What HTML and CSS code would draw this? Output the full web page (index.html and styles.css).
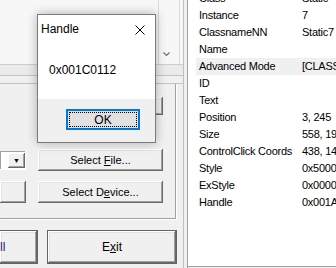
FILE: index.html
```html
<!DOCTYPE html>
<html lang="en">
<head>
  <meta charset="UTF-8" />
  <title>Window Info - Handle</title>
  <link rel="stylesheet" href="styles.css">
</head>
<body>
  <div class="screen">
    <div class="left-pane">
      <div class="top-panel">
        <div class="top-fill"></div>
        <div class="collapser">
          <svg class="chevron" width="7" height="5" viewBox="0 0 7 5">
            <path d="M0.5 0.5 L3.5 3.5 L6.5 0.5" stroke="#707070" stroke-width="1.2" fill="none"/>
          </svg>
        </div>
      </div>
      <div class="band band-a"></div>
      <div class="band band-b"></div>

      <div class="group">
        <div class="btn btn-hidden"></div>
        <div class="group-row">
          <div class="combo">
            <div class="combo-field"></div>
            <div class="combo-btn">&#9660;</div>
          </div>
          <div class="btn btn-wide"><span>Select <u>F</u>ile...</span></div>
        </div>
        <div class="group-row">
          <div class="btn btn-small"></div>
          <div class="btn btn-wide"><span>Select D<u>e</u>vice...</span></div>
        </div>
      </div>

      <div class="bottom-row">
        <div class="btn-frame frame-cut"><div class="btn btn-cut">ll</div></div>
        <div class="btn-frame frame-exit"><div class="btn"><span>E<u>x</u>it</span></div></div>
      </div>
    </div>

    <div class="splitter"></div>

    <div class="list">
      <div class="list-rows">
        <div class="list-row"><span class="col-key">Class</span><span class="col-val">Static</span></div>
        <div class="list-row"><span class="col-key">Instance</span><span class="col-val">7</span></div>
        <div class="list-row"><span class="col-key">ClassnameNN</span><span class="col-val">Static7</span></div>
        <div class="list-row"><span class="col-key">Name</span><span class="col-val"></span></div>
        <div class="list-row selected"><span class="col-key">Advanced Mode</span><span class="col-val">[CLASS:Static; INSTANCE:7]</span></div>
        <div class="list-row"><span class="col-key">ID</span><span class="col-val"></span></div>
        <div class="list-row"><span class="col-key">Text</span><span class="col-val"></span></div>
        <div class="list-row"><span class="col-key">Position</span><span class="col-val">3, 245</span></div>
        <div class="list-row"><span class="col-key">Size</span><span class="col-val">558, 19</span></div>
        <div class="list-row"><span class="col-key">ControlClick Coords</span><span class="col-val">438, 14</span></div>
        <div class="list-row"><span class="col-key">Style</span><span class="col-val">0x50000000</span></div>
        <div class="list-row"><span class="col-key">ExStyle</span><span class="col-val">0x00000000</span></div>
        <div class="list-row"><span class="col-key">Handle</span><span class="col-val">0x001A0F3C</span></div>
      </div>
    </div>

    <div class="dialog">
      <div class="dialog-title">
        <span>Handle</span>
        <svg class="close-x" width="10" height="10" viewBox="0 0 10 10">
          <path d="M0.5 0.5 L9.5 9.5 M9.5 0.5 L0.5 9.5" stroke="#000" stroke-width="1" fill="none"/>
        </svg>
      </div>
      <div class="dialog-body">0x001C0112</div>
      <div class="dialog-footer">
        <div class="ok-btn"><span class="ok-focus">OK</span></div>
      </div>
    </div>
  </div>
</body>
</html>
```

FILE: styles.css
```css
body {
  margin: 0;
  padding: 0;
  background-color: #f0f0f0;
}

.screen {
  position: relative;
  display: flex;
  width: 336px;
  height: 268px;
  overflow: hidden;
  background-color: #f0f0f0;
  font-family: "Liberation Sans", Arial, sans-serif;
  color: #000;
}

/* left side of the main window */
.left-pane {
  width: 183px;
  flex-shrink: 0;
  display: flex;
  flex-direction: column;
}

.top-panel {
  height: 64px;
  display: flex;
  background-color: #f7f7f7;
  border-bottom: 1px solid #cdcdcd;
}

.top-fill {
  flex-grow: 1;
}

.collapser {
  width: 20px;
  margin-right: 3px;
  border-left: 1px solid #dadada;
  border-right: 1px solid #dadada;
  display: flex;
  align-items: flex-end;
  justify-content: flex-start;
  padding: 0 0 7px 4px;
  box-sizing: border-box;
  width: 22px;
}

.chevron {
  display: block;
}

.band-a {
  height: 10px;
  background-color: #ebebeb;
  border-bottom: 1px solid #c3c3c3;
}

.band-b {
  height: 7px;
  border-bottom: 1px solid #c3c3c3;
}

.group {
  width: 175px;
  padding-top: 13px;
  padding-bottom: 15px;
  border-right: 1px solid #a0a0a0;
  border-bottom: 1px solid #a0a0a0;
  box-shadow: 1px 1px 0 #fff;
  display: flex;
  flex-direction: column;
}

.group-row {
  display: flex;
  align-items: center;
  height: 22px;
  margin-top: 10px;
}

.btn {
  box-sizing: border-box;
  background-color: #f0f0f0;
  box-shadow: inset -1px -1px #696969, inset 1px 1px #fff, inset -2px -2px #a0a0a0, inset 2px 2px #e3e3e3;
  font-size: 11px;
  display: flex;
  align-items: center;
  justify-content: center;
}

.btn-hidden {
  margin-left: 38px;
  width: 125px;
  height: 18px;
  margin-bottom: 24px;
}

.combo {
  width: 26px;
  height: 19px;
  margin-right: 12px;
  display: flex;
  background-color: #fff;
  box-shadow: inset -1px -1px #fff, inset 1px 1px #a0a0a0;
  padding: 2px 1px 2px 0;
  box-sizing: border-box;
}

.combo-field {
  flex-grow: 1;
}

.combo-btn {
  width: 17px;
  background-color: #f0f0f0;
  box-shadow: inset -1px -1px #696969, inset 1px 1px #fff, inset -2px -2px #a0a0a0;
  font-size: 7px;
  display: flex;
  align-items: center;
  justify-content: center;
}

.btn-wide {
  width: 125px;
  height: 22px;
}

.btn-small {
  width: 26px;
  height: 22px;
  margin-right: 12px;
}

.bottom-row {
  display: flex;
  gap: 9px;
  margin-top: 11px;
}

.btn-frame {
  height: 34px;
  border: 1px solid #646464;
  box-sizing: border-box;
  display: flex;
}

.btn-frame .btn {
  flex-grow: 1;
}

.frame-cut {
  width: 38px;
  border-left: none;
}

.btn-cut {
  justify-content: flex-start;
  color: #1c1c8c;
  font-size: 12px;
}

.frame-exit {
  width: 130px;
}

.frame-exit .btn {
  font-size: 12px;
}

/* splitter and list view */
.splitter {
  width: 3px;
  flex-shrink: 0;
  border-left: 1px solid #c0c0c0;
  border-right: 1px solid #a0a0a0;
}

.list {
  flex-grow: 1;
  height: 266px;
  background-color: #fff;
  border-bottom: 1px solid #a0a0a0;
  overflow: hidden;
  white-space: nowrap;
}

.list-rows {
  margin-top: -10px;
  padding-left: 8px;
}

.list-row {
  display: flex;
  height: 17px;
  line-height: 17px;
  font-size: 11px;
  letter-spacing: -0.25px;
}

.list-row.selected {
  background-color: #f0f0f0;
}

.col-key {
  width: 103px;
  padding-left: 3px;
  box-sizing: border-box;
  flex-shrink: 0;
}

.col-val {
  padding-left: 3px;
}

/* message box */
.dialog {
  position: absolute;
  left: 37px;
  top: 14px;
  width: 119px;
  height: 129px;
  box-sizing: border-box;
  border: 1px solid #7a7a7a;
  background-color: #fff;
  box-shadow: 0 0 10px rgba(0, 0, 0, 0.28);
  display: flex;
  flex-direction: column;
  font-size: 12px;
}

.dialog-title {
  height: 28px;
  display: flex;
  align-items: center;
  justify-content: space-between;
  padding: 0 10px 0 3px;
}

.close-x {
  margin-top: 1px;
}

.dialog-body {
  height: 56px;
  padding-left: 11px;
  padding-top: 20px;
  box-sizing: border-box;
}

.dialog-footer {
  flex-grow: 1;
  background-color: #f0f0f0;
  padding: 10px 0 0 28px;
}

.ok-btn {
  width: 74px;
  height: 21px;
  box-sizing: border-box;
  border: 2px solid #0078d7;
  background-color: #e1e1e1;
  padding: 1px;
  display: flex;
}

.ok-focus {
  flex-grow: 1;
  border: 1px dotted #000;
  display: flex;
  align-items: center;
  justify-content: center;
  font-size: 12px;
}
```
